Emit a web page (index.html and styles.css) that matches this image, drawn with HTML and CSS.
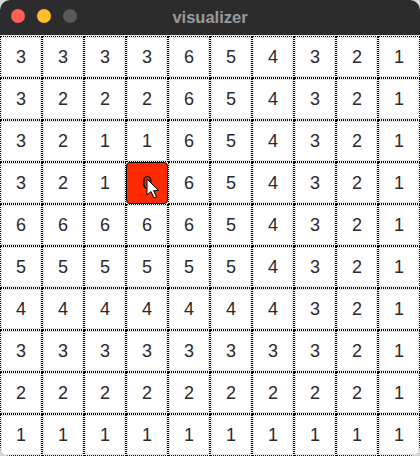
FILE: index.html
```html
<!DOCTYPE html>
<html>
<head>
<meta charset="utf-8">
<link rel="stylesheet" href="styles.css">
</head>
<body>
<div class="window">
  <div class="titlebar">
    <div class="lights">
      <span class="light red"></span>
      <span class="light yellow"></span>
      <span class="light gray"></span>
    </div>
    <div class="title">visualizer</div>
  </div>
  <div class="grid">
    <div class="cell">3</div><div class="cell">3</div><div class="cell">3</div><div class="cell">3</div><div class="cell">6</div><div class="cell">5</div><div class="cell">4</div><div class="cell">3</div><div class="cell">2</div><div class="cell">1</div>
    <div class="cell">3</div><div class="cell">2</div><div class="cell">2</div><div class="cell">2</div><div class="cell">6</div><div class="cell">5</div><div class="cell">4</div><div class="cell">3</div><div class="cell">2</div><div class="cell">1</div>
    <div class="cell">3</div><div class="cell">2</div><div class="cell">1</div><div class="cell">1</div><div class="cell">6</div><div class="cell">5</div><div class="cell">4</div><div class="cell">3</div><div class="cell">2</div><div class="cell">1</div>
    <div class="cell">3</div><div class="cell">2</div><div class="cell">1</div><div class="cell active">0<svg class="cursor" width="14" height="22" viewBox="0 0 14 22"><path d="M1 1 L1 17 L5 13.5 L8 20 L10.5 19 L7.6 12.6 L12.5 12.6 Z" fill="#fff" stroke="#000" stroke-width="1" stroke-linejoin="round"/></svg></div><div class="cell">6</div><div class="cell">5</div><div class="cell">4</div><div class="cell">3</div><div class="cell">2</div><div class="cell">1</div>
    <div class="cell">6</div><div class="cell">6</div><div class="cell">6</div><div class="cell">6</div><div class="cell">6</div><div class="cell">5</div><div class="cell">4</div><div class="cell">3</div><div class="cell">2</div><div class="cell">1</div>
    <div class="cell">5</div><div class="cell">5</div><div class="cell">5</div><div class="cell">5</div><div class="cell">5</div><div class="cell">5</div><div class="cell">4</div><div class="cell">3</div><div class="cell">2</div><div class="cell">1</div>
    <div class="cell">4</div><div class="cell">4</div><div class="cell">4</div><div class="cell">4</div><div class="cell">4</div><div class="cell">4</div><div class="cell">4</div><div class="cell">3</div><div class="cell">2</div><div class="cell">1</div>
    <div class="cell">3</div><div class="cell">3</div><div class="cell">3</div><div class="cell">3</div><div class="cell">3</div><div class="cell">3</div><div class="cell">3</div><div class="cell">3</div><div class="cell">2</div><div class="cell">1</div>
    <div class="cell">2</div><div class="cell">2</div><div class="cell">2</div><div class="cell">2</div><div class="cell">2</div><div class="cell">2</div><div class="cell">2</div><div class="cell">2</div><div class="cell">2</div><div class="cell">1</div>
    <div class="cell">1</div><div class="cell">1</div><div class="cell">1</div><div class="cell">1</div><div class="cell">1</div><div class="cell">1</div><div class="cell">1</div><div class="cell">1</div><div class="cell">1</div><div class="cell">1</div>
  </div>
</div>
</body>
</html>
```
FILE: styles.css
```css
html, body {
  margin: 0;
  padding: 0;
  background: #d6d6d6;
}
.window {
  width: 420px;
  height: 456px;
  border-radius: 10px;
  overflow: hidden;
  background: #ffffff;
  display: flex;
  flex-direction: column;
}
.titlebar {
  height: 35px;
  background: #2c2c2c;
  border-bottom: 1px solid #e6e6e6;
  position: relative;
  display: flex;
  align-items: center;
  justify-content: center;
  flex: none;
}
.lights {
  position: absolute;
  left: 11px;
  top: 9px;
  display: flex;
  gap: 12px;
}
.light {
  width: 14px;
  height: 14px;
  border-radius: 50%;
  display: block;
}
.red { background: #fe5f57; }
.yellow { background: #febc2e; }
.gray { background: #595959; }
.title {
  font-family: "Liberation Sans", Arial, sans-serif;
  font-weight: bold;
  font-size: 16.5px;
  color: #9a9a9a;
  margin-top: -1px;
}
.grid {
  display: grid;
  grid-template-columns: repeat(10, 42px);
  grid-template-rows: repeat(10, 42px);
}
.cell {
  box-sizing: border-box;
  border: 1px dotted #000;
  background: #fff;
  box-shadow: inset 0 0 0 1px #e4e4e4;
  display: flex;
  align-items: center;
  justify-content: center;
  font-family: "Liberation Sans", Arial, sans-serif;
  font-size: 18px;
  color: #2a2a2a;
  position: relative;
}
.active {
  background: #ff2a00;
  border: 1px solid #000;
  border-radius: 4px;
  box-shadow: none;
  color: #111;
}
.cursor {
  position: absolute;
  left: 19px;
  top: 15px;
}
```
